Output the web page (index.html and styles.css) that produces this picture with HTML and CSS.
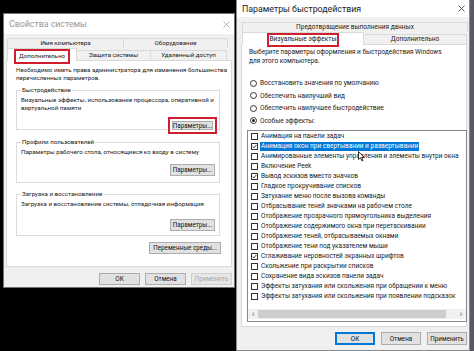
FILE: index.html
```html
<!DOCTYPE html>
<html lang="ru">
<head>
  <meta charset="UTF-8" />
  <title>Свойства системы</title>
  <link rel="stylesheet" href="styles.css">
</head>
<body>
  <div class="left-col">
    <div class="dialog sysprops">
      <div class="titlebar inactive">
        <span>Свойства системы</span>
        <svg class="close" width="7" height="7" viewBox="0 0 7 7"><path d="M0.5 0.5L6.5 6.5M6.5 0.5L0.5 6.5" /></svg>
      </div>
      <div class="dlg-body">
        <div class="tabs">
          <div class="tab-row back">
            <div class="tab" style="width:117px">Имя компьютера</div>
            <div class="tab" style="width:105px">Оборудование</div>
          </div>
          <div class="tab-row">
            <div class="tab active" style="width:70px"><span class="marked-label wide">Дополнительно</span></div>
            <div class="tab" style="width:75px">Защита системы</div>
            <div class="tab" style="width:77px">Удаленный доступ</div>
          </div>
        </div>
        <div class="panel">
          <p class="intro">Необходимо иметь права администратора для изменения большинства<br>перечисленных параметров.</p>

          <fieldset class="group g1">
            <legend>Быстродействие</legend>
            <p>Визуальные эффекты, использование процессора, оперативной и<br>виртуальной памяти</p>
            <div class="btn-line"><button class="btn marked-btn">Параметры...</button></div>
          </fieldset>

          <fieldset class="group g2">
            <legend>Профили пользователей</legend>
            <p>Параметры рабочего стола, относящиеся ко входу в систему</p>
            <div class="btn-line"><button class="btn">Параметры...</button></div>
          </fieldset>

          <fieldset class="group g3">
            <legend>Загрузка и восстановление</legend>
            <p>Загрузка и восстановление системы, отладочная информация</p>
            <div class="btn-line"><button class="btn">Параметры...</button></div>
          </fieldset>

          <div class="env-line"><button class="btn env">Переменные среды...</button></div>
        </div>
        <div class="footer">
          <button class="btn foot">ОК</button>
          <button class="btn foot">Отмена</button>
          <button class="btn foot disabled">Применить</button>
        </div>
      </div>
    </div>
  </div>

  <div class="dialog perf">
    <div class="titlebar">
      <span>Параметры быстродействия</span>
      <svg class="close" width="7" height="7" viewBox="0 0 7 7"><path d="M0.5 0.5L6.5 6.5M6.5 0.5L0.5 6.5" /></svg>
    </div>
    <div class="dlg-body">
      <div class="tabs">
        <div class="tab-row back">
          <div class="tab" style="width:226px">Предотвращение выполнения данных</div>
        </div>
        <div class="tab-row">
          <div class="tab active" style="width:122px"><span class="marked-label">Визуальные эффекты</span></div>
          <div class="tab" style="width:104px">Дополнительно</div>
        </div>
      </div>
      <div class="panel perf-panel">
        <p class="intro2">Выберите параметры оформления и быстродействия Windows<br>для этого компьютера.</p>
        <div class="radios">
          <div class="radio"><span class="dot"></span>Восстановить значения по умолчанию</div>
          <div class="radio"><span class="dot"></span>Обеспечить наилучший вид</div>
          <div class="radio"><span class="dot"></span>Обеспечить наилучшее быстродействие</div>
          <div class="radio on"><span class="dot"></span>Особые эффекты:</div>
        </div>
        <div class="listbox">
          <div class="items" id="items"></div>
          <div class="hscroll">
            <span class="arrow">&lsaquo;</span>
            <span class="thumb"></span>
            <span class="arrow">&rsaquo;</span>
          </div>
          <svg class="cursor" width="7" height="11" viewBox="0 0 7 11"><path d="M0.5 0.5V8.5L2.5 6.8L3.9 9.9L5 9.4L3.7 6.4H6.2Z" fill="#fff" stroke="#000" stroke-width="0.8"/></svg>
        </div>
      </div>
      <div class="footer">
        <button class="btn foot default">ОК</button>
        <button class="btn foot">Отмена</button>
        <button class="btn foot">Применить</button>
      </div>
    </div>
  </div>
  <div class="edge"></div>

  <script>
    // список визуальных эффектов: [текст, отмечен, выделен]
    const effects = [
      ['Анимация на панели задач', false],
      ['Анимация окон при свертывании и развертывании', true, true],
      ['Анимированные элементы управления и элементы внутри окна', false],
      ['Включение Peek', false],
      ['Вывод эскизов вместо значков', true],
      ['Гладкое прокручивание списков', false],
      ['Затухание меню после вызова команды', false],
      ['Отбрасывание теней значками на рабочем столе', false],
      ['Отображение прозрачного прямоугольника выделения', false],
      ['Отображение содержимого окна при перетаскивании', false],
      ['Отображение теней, отбрасываемых окнами', false],
      ['Отображение тени под указателем мыши', false],
      ['Сглаживание неровностей экранных шрифтов', true],
      ['Скольжение при раскрытии списков', false],
      ['Сохранение вида эскизов панели задач', false],
      ['Эффекты затухания или скольжения при обращении к меню', false],
      ['Эффекты затухания или скольжения при появлении подсказок', false]
    ];
    const check = '<svg width="5" height="5" viewBox="0 0 5 5"><path d="M0.6 2.6L1.9 3.9L4.4 0.9" fill="none" stroke="#222" stroke-width="0.9"/></svg>';
    const box = document.getElementById('items');
    effects.forEach(([text, checked, selected]) => {
      const row = document.createElement('div');
      row.className = 'item';
      row.innerHTML = `<span class="cb">${checked ? check : ''}</span><span class="label${selected ? ' sel' : ''}">${text}</span>`;
      box.appendChild(row);
    });
  </script>
</body>
</html>
```

FILE: styles.css
```css
* {
  box-sizing: border-box;
}
body {
  margin: 0;
  width: 474px;
  height: 351px;
  overflow: hidden;
  background: #000;
  display: flex;
  font-family: Roboto, 'Noto Sans', sans-serif;
  font-size: 6.5px;
  color: #1a1a1a;
}
p {
  margin: 0;
  white-space: nowrap;
}
.left-col {
  width: 236px;
  padding: 13px 1px 0 3px;
}
.dialog {
  background: #f0f0f0;
  display: flex;
  flex-direction: column;
}
.sysprops {
  width: 232px;
  height: 275px;
  border: 1px solid #707070;
  font-size: 6.2px;
}
.perf {
  width: 234px;
  height: 351px;
  border: 1px solid #8a8a8a;
  border-top: none;
}
.edge {
  width: 4px;
  background: #5d5868;
}
.titlebar {
  height: 20px;
  background: #fff;
  display: flex;
  align-items: center;
  justify-content: space-between;
  padding: 0 4px 0 5px;
  font-size: 8.8px;
}
.titlebar .close {
  stroke: #333;
  stroke-width: 0.8;
}
.titlebar.inactive {
  color: #9a9a9a;
}
.titlebar.inactive .close {
  stroke: #a0a0a0;
}
.perf .titlebar {
  height: 17px;
}
.dlg-body {
  flex: 1;
  display: flex;
  flex-direction: column;
  padding: 4px 2px 0 2px;
}
.perf .dlg-body {
  padding: 5px 2px 0 4px;
}

/* вкладки */
.tabs {
  padding-left: 1px;
}
.tab-row {
  display: flex;
  height: 12px;
  align-items: flex-end;
}
.tab-row.back {
  height: 10px;
}
.tab {
  height: 10px;
  border: 1px solid #d9d9d9;
  border-bottom: none;
  margin-right: -1px;
  background: #f0f0f0;
  text-align: center;
  line-height: 9px;
  white-space: nowrap;
}
.tab.active {
  height: 13px;
  background: #fff;
  position: relative;
  z-index: 1;
  margin-bottom: -1px;
  line-height: 12px;
}
.marked-label {
  border: 2px solid #cf1f2f;
  padding: 0 1px 1px;
  line-height: 9px;
  display: inline-block;
}
.marked-label.wide {
  padding: 0 3px 1px;
  line-height: 10px;
}
.panel {
  background: #fff;
  border: 1px solid #d9d9d9;
  height: 207px;
  padding: 5px 3px 0 9px;
  display: flex;
  flex-direction: column;
}
.intro {
  line-height: 8px;
  margin-bottom: 4px;
}
.group {
  margin: 0 8px 0 0;
  border: 1px solid #dcdcdc;
  padding: 0 4px 0 4px;
  min-width: 0;
}
.group legend {
  padding: 0 1px;
  line-height: 8px;
}
.group p {
  line-height: 8px;
  margin-top: 2px;
}
.g1 {
  height: 44px;
}
.g2 {
  height: 45px;
  margin-top: 8px;
}
.g3 {
  height: 46px;
  margin-top: 7px;
}
.btn-line {
  display: flex;
  justify-content: flex-end;
}
.g1 .btn-line {
  margin-top: 5px;
}
.g2 .btn-line {
  margin-top: 8px;
}
.g3 .btn-line {
  margin-top: 11px;
}
.btn {
  font-family: inherit;
  font-size: 6.3px;
  color: #111;
  height: 12px;
  padding: 0;
  background: #e1e1e1;
  border: 1px solid #adadad;
  line-height: 10px;
}
.group .btn {
  width: 45px;
}
.marked-btn {
  height: 17px;
  width: 49px !important;
  border: 2px solid #cf1f2f;
  box-shadow: inset 0 0 0 2px #fff, inset 0 0 0 3px #adadad;
  margin-right: -2px;
}
.env-line {
  display: flex;
  justify-content: flex-end;
  margin-top: 6px;
  padding-right: 7px;
}
.env {
  width: 72px;
}
.footer {
  display: flex;
  justify-content: flex-end;
  gap: 5px;
  padding-top: 6px;
}
.foot {
  width: 41px;
}
.disabled {
  color: #a8a8a8;
  border-color: #d0d0d0;
  background: #e6e6e6;
}
.default {
  border-color: #0078d7;
  box-shadow: inset 0 0 0 1px #0078d7;
}

/* параметры быстродействия */
.perf-panel {
  height: 283px;
  padding: 3px 0 0 7px;
}
.perf .footer {
  padding-top: 5px;
  gap: 6px;
}
.perf .foot {
  width: 40px;
  height: 13px;
}
.intro2 {
  line-height: 9px;
  margin-bottom: 11px;
}
.radio {
  display: flex;
  align-items: center;
  height: 12.5px;
  gap: 3px;
  padding-left: 1px;
}
.dot {
  width: 7px;
  height: 7px;
  border: 1px solid #333;
  border-radius: 50%;
  background: #fff;
  display: flex;
  align-items: center;
  justify-content: center;
}
.radio.on .dot::after {
  content: '';
  width: 3px;
  height: 3px;
  border-radius: 50%;
  background: #222;
}
.listbox {
  position: relative;
  margin: 3px 0 0 -2px;
  width: 220px;
  height: 192px;
  border: 1px solid #828790;
  overflow: hidden;
  display: flex;
  flex-direction: column;
}
.items {
  flex: 1;
}
.item {
  display: flex;
  align-items: center;
  height: 10px;
  white-space: nowrap;
  padding-left: 3px;
}
.cb {
  flex: none;
  width: 7px;
  height: 7px;
  border: 1px solid #333;
  background: #fff;
  display: flex;
  align-items: center;
  justify-content: center;
  margin-right: 2px;
}
.label {
  padding: 0 1px;
  line-height: 9px;
}
.label.sel {
  background: #0078d7;
  color: #fff;
}
.hscroll {
  height: 10px;
  margin-bottom: 2px;
  background: #f0f0f0;
  display: flex;
  align-items: center;
  color: #606060;
  font-size: 9px;
  line-height: 10px;
}
.arrow {
  width: 10px;
  text-align: center;
}
.thumb {
  flex: 1;
  height: 8px;
  background: #cdcdcd;
  margin-right: 10px;
}
.cursor {
  position: absolute;
  left: 110px;
  top: 20px;
}
```
